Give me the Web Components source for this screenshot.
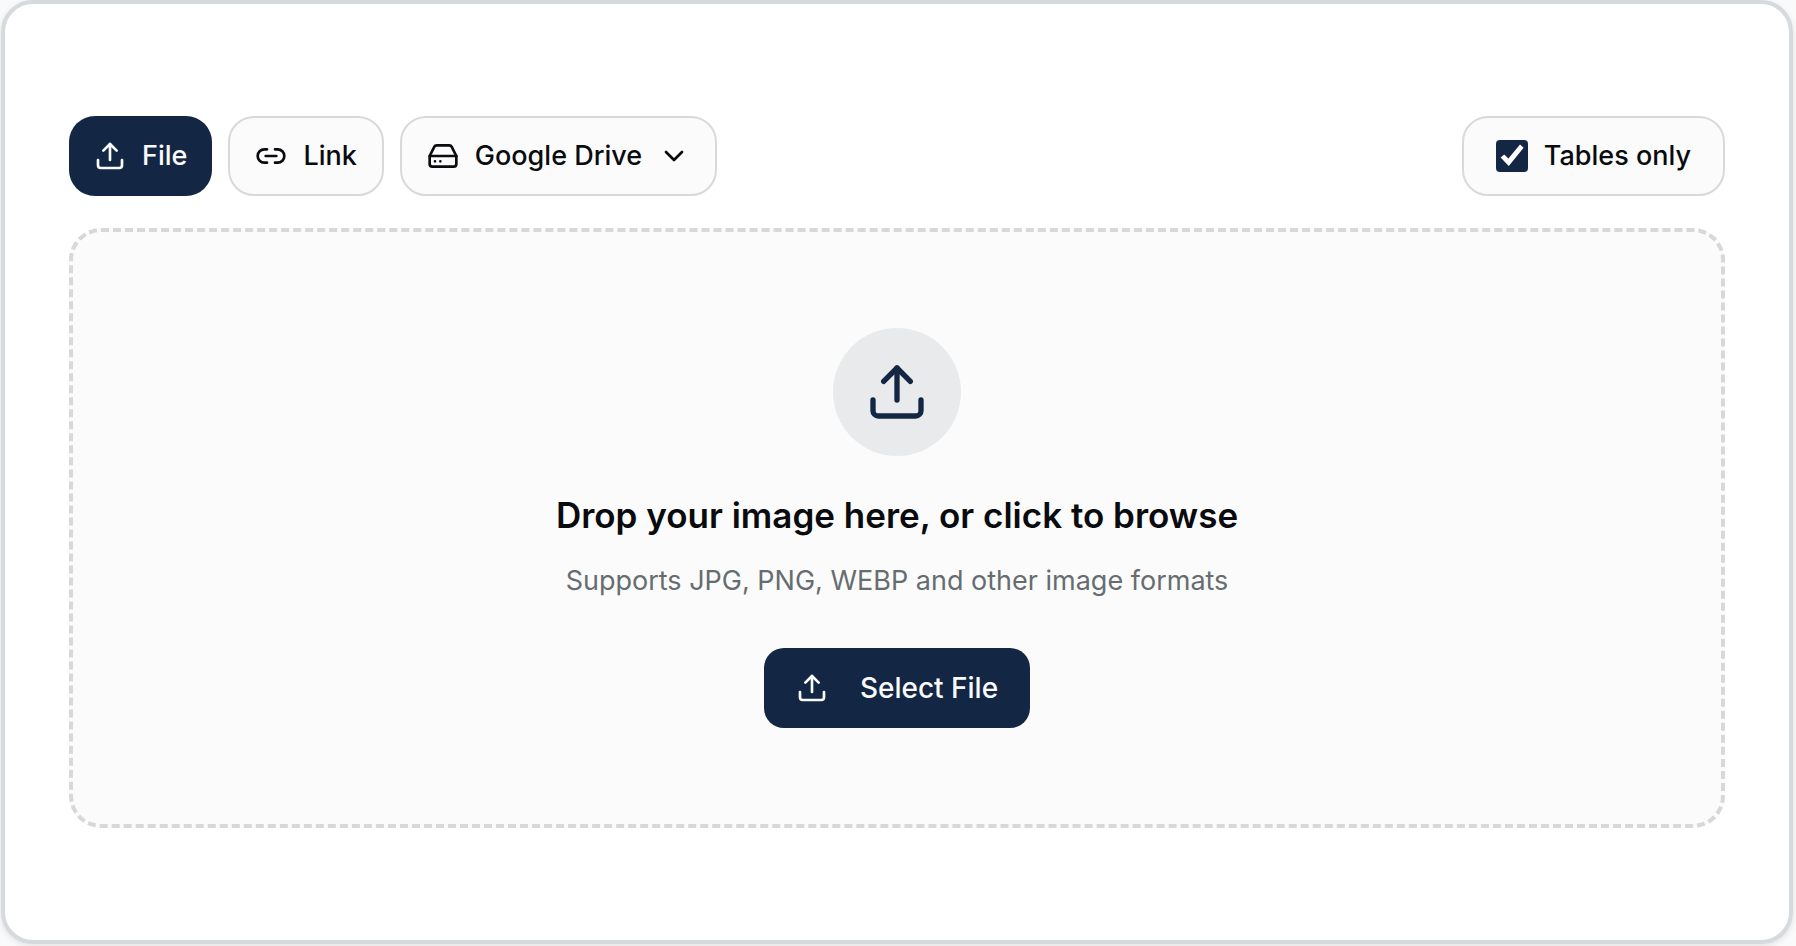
<!DOCTYPE html>
<html lang="en">
<head>
<meta charset="utf-8">
<meta name="viewport" content="width=device-width, initial-scale=1">
<title>Upload</title>
<style>
  *{box-sizing:border-box}
  body{margin:0;padding:0 3px 2px 1px;background:#fafafb;color:#090b0e;font-family:Inter,"Liberation Sans",sans-serif;font-size:27px;line-height:36px}
</style>
</head>
<body>
<upload-card>
  <upload-toolbar slot="toolbar">
    <tool-button variant="primary" icon="upload">File</tool-button>
    <tool-button icon="link">Link</tool-button>
    <tool-button icon="drive" menu>Google Drive</tool-button>
    <check-pill slot="end" checked>Tables only</check-pill>
  </upload-toolbar>
  <drop-zone>
    <span slot="title">Drop your image here, or click to browse</span>
    <span slot="hint">Supports JPG, PNG, WEBP and other image formats</span>
    <span slot="action">Select File</span>
  </drop-zone>
</upload-card>

<script>
(function () {
  const ICONS = {
    upload: '<path d="M21 15v4a2 2 0 0 1-2 2H5a2 2 0 0 1-2-2v-4"/><path d="m17 8-5-5-5 5"/><path d="M12 3v12"/>',
    link: '<path d="M9 17H7A5 5 0 0 1 7 7h2"/><path d="M15 7h2a5 5 0 1 1 0 10h-2"/><path d="M8 12h8"/>',
    drive: '<path d="M22 12H2"/><path d="M5.45 5.11 2 12v6a2 2 0 0 0 2 2h16a2 2 0 0 0 2-2v-6l-3.45-6.89A2 2 0 0 0 16.76 4H7.24a2 2 0 0 0-1.79 1.11z"/><path d="M6 16h.01M10 16h.01"/>',
    chevron: '<path d="m6 9 6 6 6-6"/>'
  };

  class UiIcon extends HTMLElement {
    connectedCallback() {
      if (this.shadowRoot) return;
      const s = this.attachShadow({ mode: 'open' });
      s.innerHTML = `
        <style>
          :host{display:block;flex:none;width:32px;height:32px}
          svg{display:block;width:100%;height:100%}
        </style>
        <svg viewBox="0 0 24 24" fill="none" stroke="currentColor" stroke-width="2" stroke-linecap="round" stroke-linejoin="round" aria-hidden="true">${ICONS[this.getAttribute('name')]}</svg>`;
    }
  }
  customElements.define('ui-icon', UiIcon);

  class ToolButton extends HTMLElement {
    connectedCallback() {
      if (this.shadowRoot) return;
      const s = this.attachShadow({ mode: 'open' });
      const menu = this.hasAttribute('menu');
      s.innerHTML = `
        <style>
          *{box-sizing:border-box}
          :host{display:block}
          button{display:flex;align-items:center;gap:16px;min-height:80px;padding:0 25px;border:2px solid #d7d9db;border-radius:26px;background:#fbfbfb;color:inherit;font:inherit;font-weight:500;white-space:nowrap;cursor:pointer}
          button:hover{background:#f1f3f4}
          :host([variant=primary]) button{border:0;background:#132644;color:#fafafa}
          :host([variant=primary]) button:hover{background:#1d3459}
        </style>
        <button type="button"${menu ? ' aria-haspopup="menu"' : ''}>
          <ui-icon name="${this.getAttribute('icon')}"></ui-icon>
          <span><slot></slot></span>
          ${menu ? '<ui-icon name="chevron"></ui-icon>' : ''}
        </button>`;
    }
  }
  customElements.define('tool-button', ToolButton);

  class CheckPill extends HTMLElement {
    connectedCallback() {
      if (this.shadowRoot) return;
      const s = this.attachShadow({ mode: 'open' });
      s.innerHTML = `
        <style>
          *{box-sizing:border-box}
          :host{display:block}
          label{display:flex;align-items:center;gap:16px;min-height:80px;padding:0 32px;border:2px solid #d7d9db;border-radius:26px;background:#fbfbfb;font-weight:500;white-space:nowrap;cursor:pointer}
          .box{display:grid;flex:none;width:32px;height:32px}
          input,svg{grid-area:1/1;width:32px;height:32px;margin:0}
          input{appearance:none;border:2px solid #8b9199;border-radius:4px;background:#fff;cursor:pointer}
          input:checked{border:0;background:#132644}
          svg{pointer-events:none;visibility:hidden}
          input:checked + svg{visibility:visible}
        </style>
        <label for="check">
          <span class="box">
            <input id="check" type="checkbox"${this.hasAttribute('checked') ? ' checked' : ''}>
            <svg viewBox="0 0 32 32" fill="#fff" aria-hidden="true"><path d="M4.6 17.6 8.2 14.6 12.4 18.6 24 4.6 27.6 7.8 12.8 26z"/></svg>
          </span>
          <span><slot></slot></span>
        </label>`;
    }
  }
  customElements.define('check-pill', CheckPill);

  class UploadToolbar extends HTMLElement {
    connectedCallback() {
      if (this.shadowRoot) return;
      const s = this.attachShadow({ mode: 'open' });
      s.innerHTML = `
        <style>
          :host{display:flex;flex-wrap:wrap;justify-content:space-between;gap:16px}
          .group{display:flex;flex-wrap:wrap;gap:16px}
        </style>
        <div class="group"><slot></slot></div>
        <slot name="end"></slot>`;
    }
  }
  customElements.define('upload-toolbar', UploadToolbar);

  class DropZone extends HTMLElement {
    connectedCallback() {
      if (this.shadowRoot) return;
      const s = this.attachShadow({ mode: 'open' });
      s.innerHTML = `
        <style>
          *{box-sizing:border-box}
          :host{display:block}
          section{display:flex;flex-direction:column;align-items:center;padding:96px 32px;border:4px dashed #d6d8d9;border-radius:32px;background:#fbfbfb;text-align:center}
          .badge{display:grid;place-items:center;width:128px;height:128px;border-radius:50%;background:#e8eaeb;color:#132644}
          .badge ui-icon{width:64px;height:64px}
          h2{margin:32px 0 18px;font-size:35px;line-height:54px;font-weight:600}
          p{margin:0 0 46px;line-height:42px;color:#666d70}
          button{display:flex;align-items:center;gap:32px;min-height:80px;padding:0 32px;border:0;border-radius:20px;background:#132644;color:#fafafa;font:inherit;font-size:28px;font-weight:500;cursor:pointer}
          button:hover{background:#1d3459}
        </style>
        <section>
          <div class="badge"><ui-icon name="upload"></ui-icon></div>
          <h2><slot name="title"></slot></h2>
          <p><slot name="hint"></slot></p>
          <button type="button"><ui-icon name="upload"></ui-icon><slot name="action"></slot></button>
          <input type="file" accept="image/*" hidden>
        </section>`;
      const input = s.querySelector('input');
      s.querySelector('section').addEventListener('click', () => input.click());
      input.addEventListener('click', e => e.stopPropagation());
    }
  }
  customElements.define('drop-zone', DropZone);

  class UploadCard extends HTMLElement {
    connectedCallback() {
      if (this.shadowRoot) return;
      const s = this.attachShadow({ mode: 'open' });
      s.innerHTML = `
        <style>
          *{box-sizing:border-box}
          :host{display:block}
          main{display:flex;flex-direction:column;gap:32px;padding:112px 64px;border:4px solid #d7dadd;border-radius:32px;background:#fff;box-shadow:0 2px 6px rgba(0,0,0,.1)}
        </style>
        <main>
          <slot name="toolbar"></slot>
          <slot></slot>
        </main>`;
    }
  }
  customElements.define('upload-card', UploadCard);
})();
</script>
</body>
</html>
